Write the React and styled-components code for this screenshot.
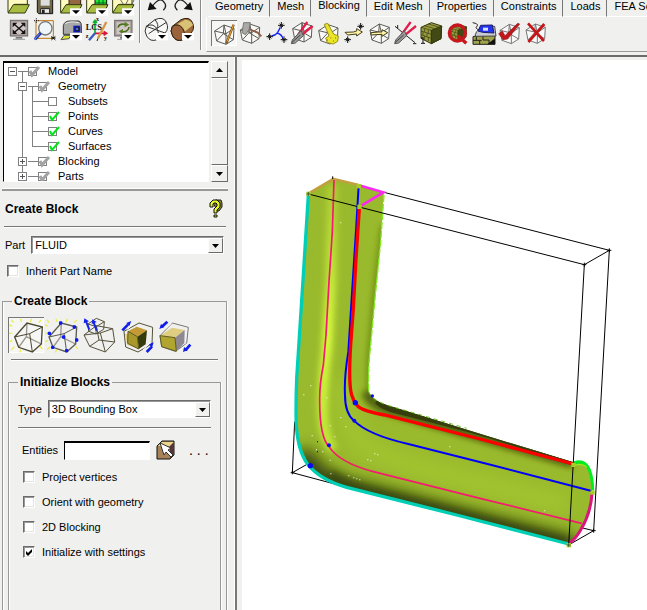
import React from "react"
import styled, { createGlobalStyle, css } from "styled-components"

const GlobalStyle = createGlobalStyle`
  * {
    box-sizing: border-box;
  }

  body {
    margin: 0;
    background: #f0f0ee;
    color: #000;
    font-family: "Liberation Sans", Arial, sans-serif;
    font-size: 11px;
    line-height: 14px;
  }

  button, input, select {
    font: inherit;
    color: inherit;
    margin: 0;
    padding: 0;
    border-radius: 0;
  }
`

const sunken = css`
  border: 1px solid;
  border-color: #6b6b6b #fff #fff #6b6b6b;
`

const Page = styled.div`
  min-height: 100vh;
  display: flex;
  flex-direction: column;
  overflow: hidden;
`

const Header = styled.header`
  display: flex;
  height: 57px;
  border-bottom: 2px solid #6b6b6b;
  overflow: hidden;
`

const ToolGroup = styled.div`
  display: grid;
  grid-template-columns: repeat(${p => p.$columns}, 26px);
  grid-template-rows: 16px 26px;
  row-gap: 1px;
  align-content: start;
  padding: 0 ${p => p.$right}px 0 ${p => p.$left}px;
  height: ${p => p.$height}px;
  border-right: 1px solid #8a8a8a;
  box-shadow: 1px 0 #fff;
`

const IconButton = styled.button`
  display: flex;
  align-items: center;
  justify-content: center;
  border: 0;
  background: none;

  svg {
    display: block;
  }
`

const ToolToggle = styled(IconButton)`
  width: ${p => p.$size}px;
  height: ${p => p.$size}px;
  flex: none;
  overflow: hidden;
  ${p => p.$active && "box-shadow: inset 1px 1px #777, inset -1px -1px #fff; background: #f6f6f4;"}
`

const TabArea = styled.div`
  flex: 1;
  min-width: 0;
  margin-left: 5px;
  overflow: hidden;
`

const TabList = styled.div`
  display: flex;
  height: 17px;
  padding-left: 2px;
`

const Tab = styled.button`
  flex: none;
  padding: 0 6px ${p => (p.$active ? 6 : 4)}px 7px;
  border: 0;
  border-right: 1px solid #777;
  border-bottom: 1px solid ${p => (p.$active ? "#f0f0ee" : "#fff")};
  background: none;
  line-height: 10px;
  white-space: nowrap;

  &:last-child {
    border-right: 0;
    padding-right: 0;
  }
`

const TabPanel = styled.div`
  display: flex;
  height: 35px;
  padding: 3px 0 0 4px;
  border-left: 1px solid #fff;
  border-bottom: 1px solid #999;
`

const Body = styled.main`
  flex: 1;
  display: flex;
`

const Side = styled.aside`
  flex: 0 0 237px;
  min-width: 0;
  display: flex;
  flex-direction: column;
  padding: 4px 7px 0 2px;
  border-right: 2px solid #777;
  box-shadow: inset -1px 0 #fff;
`

const Canvas = styled.section`
  flex: 1;
  min-width: 0;
  margin: 3px 0 0 5px;
  background: #fff;

  svg {
    display: block;
    width: 100%;
    height: auto;
  }
`

const TreeFrame = styled.div`
  display: flex;
  gap: 2px;
  height: 121px;
  margin-left: 1px;
`

const TreeBox = styled.ul`
  flex: 1;
  margin: 0;
  padding: 1px 0 0 4px;
  list-style: none;
  overflow: hidden;
  background: #fff;
  border: 1px solid #000;
  border-top-width: 2px;
  border-color: #000 #fff #fff #000;
`

const TreeRow = styled.li`
  display: flex;
  align-items: center;
  height: 15px;
`

const gray = "linear-gradient(#808080, #808080) no-repeat"
const segments = {
  t: `${gray} 4px 0 / 1px 8px`,
  b: `${gray} 4px 7px / 1px 8px`,
  l: `${gray} 0 7px / 5px 1px`,
  r: `${gray} 4px 7px / 6px 1px`,
}

const Guide = styled.span`
  width: 10px;
  height: 15px;
  display: flex;
  align-items: center;
  background: ${p => [...p.$lines].map(k => segments[k]).join(", ") || "none"};
`

const Expander = styled.button`
  width: 9px;
  height: 9px;
  border: 1px solid #808080;
  background:
    linear-gradient(#555, #555) no-repeat 1px 3px / 5px 1px,
    ${p => (p.$open ? "" : "linear-gradient(#555, #555) no-repeat 3px 1px / 1px 5px,")}
    #fff;
`

const TreeLabel = styled.label`
  display: flex;
  align-items: center;
  gap: 10px;
  line-height: 15px;
`

const TreeMark = styled.span`
  display: grid;
  width: 10px;
  height: 12px;
  align-items: center;

  input, svg {
    grid-area: 1 / 1;
  }

  svg {
    overflow: visible;
    pointer-events: none;
  }
`

const TreeCheck = styled.input`
  appearance: none;
  width: 9px;
  height: 9px;
  border: 1px solid #808080;
  background: #fff;
`

const ScrollBar = styled.div`
  width: 17px;
  display: flex;
  flex-direction: column;
`

const raised = css`
  border: 1px solid;
  border-color: #fff #6b6b6b #6b6b6b #fff;
  background: #f0f0ee;
`

const ScrollButton = styled(IconButton)`
  ${raised}
  height: 17px;
`

const ScrollThumb = styled.div`
  ${raised}
  flex: 1;
`

const Splitter = styled.div`
  height: 3px;
  margin-top: 6px;
  border-top: 1px solid #fff;
  border-bottom: 2px solid #999;
`

const Rule = styled.hr`
  height: 2px;
  width: auto;
  margin: ${p => p.$margin || 0};
  border: 0;
  border-top: 1px solid #777;
  border-bottom: 1px solid #fff;
`

const TitleRow = styled.div`
  display: flex;
  align-items: center;
  justify-content: space-between;
  height: 35px;
  padding: 0 5px 0 3px;
`

const boldText = css`
  font-size: 12px;
  font-weight: 700;
  line-height: 14px;
`

const Title = styled.h2`
  ${boldText}
  margin: 0;
`

const Field = styled.div`
  display: flex;
  align-items: center;
  margin: ${p => p.$margin};
  gap: 6px;
`

const SelectFrame = styled.div`
  ${sunken}
  flex: 1;
  display: grid;
  height: 18px;
  background: #fff;
  box-shadow: inset 1px 1px #999;

  > * {
    grid-area: 1 / 1;
  }
`

const Select = styled.select`
  appearance: none;
  border: 0;
  padding-left: 3px;
  background: none;
  line-height: 16px;
`

const SelectArrow = styled.span`
  ${raised}
  justify-self: end;
  display: flex;
  align-items: center;
  justify-content: center;
  width: 15px;
  margin-top: 1px;
  pointer-events: none;
`

const TextBox = styled.input`
  width: 86px;
  height: 19px;
  border: 1px solid;
  border-top-width: 2px;
  border-color: #000 #fff #fff #000;
  background: #fff;
`

const CheckLabel = styled.label`
  display: flex;
  align-items: center;
  gap: 7px;
  height: 14px;
  margin: ${p => p.$margin || 0};
`

const CheckFrame = styled.span`
  display: grid;

  input, svg {
    grid-area: 1 / 1;
  }

  svg {
    pointer-events: none;
  }
`

const CheckInput = styled.input`
  ${sunken}
  appearance: none;
  width: 12px;
  height: 12px;
  background: #fff;
  box-shadow: inset 1px 1px #999, inset -1px -1px #e4e4e2;

  &:not(:checked) + svg {
    visibility: hidden;
  }
`

const Group = styled.fieldset`
  flex: 1;
  min-width: 0;
  display: flex;
  flex-direction: column;
  margin: ${p => p.$margin};
  padding: 0;
  border: 1px solid #999;
  border-bottom: 0;
  box-shadow: inset 1px 0 #fff, 1px 0 #fff;
`

const Legend = styled.legend`
  ${boldText}
  margin-left: 9px;
  padding: 0 2px;
`

const BlockTools = styled.div`
  display: flex;
  gap: 1px;
  margin: 9px 0 6px 5px;
`

const Checks = styled.div`
  display: flex;
  flex-direction: column;
  gap: 11px;
  margin: 10px 0 0 14px;
`

const MoreButton = styled.button`
  border: 0;
  background: none;
  margin-left: 7px;
  font-size: 14px;
  white-space: nowrap;
`

function Art({ box, children, stroke = "none" }) {
  const [, , w, h] = box
  return (
    <svg
      width={w / 3}
      height={h / 3}
      viewBox={box.join(" ")}
      fill="none"
      stroke={stroke}
      strokeWidth="3"
      aria-hidden="true"
    >
      {children}
    </svg>
  )
}

const Drop = ({ x, y }) => (
  <g stroke="none">
    <rect x={x} y={y} width="36" height="22" fill="#fff" />
    <path d={`M${x + 6} ${y + 6}h24l-12 11z`} fill="#000" />
  </g>
)

const Down = () => (
  <svg width="7" height="4" viewBox="0 0 7 4" aria-hidden="true">
    <path d="M0 0h7L3.5 4z" />
  </svg>
)

const Up = () => (
  <svg width="7" height="4" viewBox="0 0 7 4" aria-hidden="true">
    <path d="M0 4h7L3.5 0z" />
  </svg>
)

const Folder = ({ x, children }) => (
  <g stroke="#333a10">
    <path d={`M${x + 2} -8v45h8l12-24h38v-21z`} fill="#fffbc0" />
    {children}
    <path d={`M${x + 18} 14h48l-13 25h-51z`} fill="#a9bd42" />
  </g>
)

const Monitor = ({ x }) => (
  <g>
    <rect x={x} y="64" width="52" height="47" fill="#aaa19f" stroke="#6c6664" />
    <rect x={x + 6} y="70" width="40" height="35" fill="#d2c7c7" />
    <path d={`M${x + 16} 114h20v5h-20z`} fill="#777" />
    <path d={`M${x + 8} 121h36`} stroke="#999" />
  </g>
)

const fileTools = [
  ["Open", [18, 0, 78, 48], <Folder x={22} />],
  ["Save", [96, 0, 78, 48], (
    <>
      <path d="M112 -5h46v46h-42l-4-4z" fill="#71684a" stroke="#111" />
      <path d="M122 0h27v17h-27z" fill="#ddd" />
      <path d="M122 26h27v14h-27z" fill="#eee" stroke="#222" />
      <path d="M126 29h8v10h-8z" fill="#222" />
    </>
  )],
  ["Open geometry", [174, 0, 78, 48], (
    <>
      <Folder x={180}><path d="M207 -4h35v26h-35z" fill="#936744" stroke="#3c2414" /></Folder>
      <Drop x={210} y={25} />
    </>
  )],
  ["Open mesh", [252, 0, 78, 48], (
    <>
      <Folder x={258}>
        <path d="M285 -4h35v26h-35z" fill="#20ed38" stroke="#111" />
        <path d="M297 0v20M309 0v20M285 9h35" stroke="#086318" />
      </Folder>
      <Drop x={288} y={25} />
    </>
  )],
  ["Open blocking", [330, 0, 78, 48], (
    <>
      <Folder x={336}><path d="M362 0l12 19 20-3 8-16M374 19l10-19" stroke="#686868" /></Folder>
      <Drop x={366} y={25} />
    </>
  )],
  ["Fit window", [18, 54, 78, 78], (
    <>
      <Monitor x={31} />
      <path d="M41 74l32 28M73 74L41 102" stroke="#111" strokeWidth="4" />
      <path d="M38 71h14l-14 14zM76 71H62l14 14zM76 105V91l-14 14zM38 105h14L38 91z" fill="#111" />
    </>
  )],
  ["Zoom", [96, 54, 78, 78], (
    <>
      <path d="M108 65h52v53h-52z" stroke="#bd7510" />
      <path d="M102 65h14M109 58v14" stroke="#111" strokeDasharray="3" />
      <circle cx="136" cy="88" r="20" fill="#eef6fa" stroke="#777" strokeWidth="4" />
      <path d="M122 102l-17 19" stroke="#1e2da5" strokeWidth="9" />
      <path d="M119 104l-17 19" stroke="#77a8e8" />
      <path d="M154 112l12 11M166 112l-12 11M153 117h14" stroke="#111" />
    </>
  )],
  ["Measure", [174, 54, 78, 78], (
    <>
      <path d="M190 80q3-14 20-14h28q7 6 6 16v24h-54z" fill="#a8a8a6" stroke="#333" />
      <path d="M196 74q14-9 40-3" stroke="#eee" />
      <path d="M220 80h21v20h-21z" fill="#141cbd" />
      <circle cx="231" cy="90" r="6" stroke="#111" fill="#4771d8" />
      <path d="M183 122l9-13h20l-5 10z" fill="#d8e336" stroke="#555" />
      <Drop x={210} y={102} />
    </>
  )],
  ["Local coordinates", [252, 54, 78, 78], (
    <>
      <path d="M285 103V66M279 72l6-8 6 8" stroke="#0bb42f" strokeWidth="5" />
      <path d="M285 103h32M311 97l9 6-9 6" stroke="#d71938" strokeWidth="5" />
      <path d="M285 103l-18 21" stroke="#3b58b9" strokeWidth="7" />
      <path d="M319 69l-25 49" stroke="#d79742" strokeWidth="7" />
      <path d="M294 118l-3 8" stroke="#222" />
      <g fill="#111" fontFamily="Liberation Serif, serif" fontWeight="700">
        <text x="257" y="93" fontSize="25">LCS</text>
        <g fontSize="18">
          <text x="288" y="66">x</text>
          <text x="312" y="122">y</text>
          <text x="257" y="117">z</text>
        </g>
      </g>
    </>
  )],
  ["Refresh", [330, 54, 78, 78], (
    <>
      <Monitor x={344} />
      <path d="M354 86q3-14 22-10M387 84q-2 16-22 14" stroke="#486f1b" strokeWidth="5" />
      <path d="M374 68l14 9-14 8zM369 90l-13 7 13 9z" fill="#587e25" />
      <Drop x={366} y={102} />
    </>
  )],
]

const viewTools = [
  ["Undo", [432, 0, 78, 48], (
    <>
      <path d="M456 20Q480-13 493 8q9 11-3 23" stroke="#222" strokeWidth="4" />
      <path d="M443 31l7-25 20 21z" fill="#111" />
    </>
  )],
  ["Redo", [510, 0, 78, 48], (
    <>
      <path d="M566 20Q543-13 529 8q-9 11 3 23" stroke="#222" strokeWidth="4" />
      <path d="M578 31l-7-25-20 21z" fill="#111" />
    </>
  )],
  ["Wire frame", [432, 54, 78, 78], (
    <>
      <path d="M439 82l26-20q25-11 34 8 9 19-4 32l-24 20q-20 8-31-11-9-15-1-29z" fill="#f7f7f5" stroke="#333" />
      <path d="M439 82q19-11 31 6 10 15 1 34M439 82l56 20M465 62q13 16 6 26l28-18M446 104l24-16" stroke="#333" />
      <Drop x={468} y={102} />
    </>
  )],
  ["Solid", [510, 54, 78, 78], (
    <>
      <path d="M517 82l26-20q25-11 34 8 9 19-4 32l-24 20q-20 8-31-11-9-15-1-29z" fill="#9e6938" stroke="#2d2110" />
      <path d="M531 76l24-14q20 1 24 16l-27 22q-2-17-21-24z" fill="#d9c275" />
      <path d="M517 82q19-11 31 6 10 15 1 34-20 8-31-11-9-15-1-29z" fill="#9b633c" stroke="#2d2110" />
      <Drop x={546} y={102} />
    </>
  )],
]

const Wire = ({ x, y = 72, color = "#5d5d57" }) => (
  <g transform={`translate(${x} ${y})`} stroke={color} strokeWidth="3">
    <path d="M2 20L30 2l30 10-2 34-22 14-28-10z" fill="#f9f9f7" />
    <path d="M2 20l34 8 24-16M36 28v32M30 2l-2 26L8 50M28 28l30 18M30 2l6 26" />
  </g>
)

const Star = ({ x, y }) => (
  <path
    d={`M${x - 10} ${y}h20M${x} ${y - 10}v20M${x - 5} ${y - 5}l10 10M${x + 5} ${y - 5}l-10 10`}
    stroke="#111"
  />
)

const Bricks = () => (
  <g stroke="#303910">
    <path d="M18 82l31-14 31 10-2 38-29 15-31-16z" fill="#9b9c3e" />
    <path d="M49 91l31-13-2 38-29 15z" fill="#434914" />
    <path d="M18 82l31 9v40M18 93l31 10M18 104l31 11M29 86v10M40 90v10M24 95v11M36 99v12M29 107v14M40 111v12M28 77l31 9M40 72l30 9" strokeWidth="2" />
  </g>
)

const Pliers = ({ x }) => (
  <g transform={`translate(${x} 0)`}>
    <path d="M19 103L46 66M24 109l38-31" stroke="#e31d4b" strokeWidth="7" />
    <path d="M27 92l7 15-24 22-12 2 3-11z" fill="#999" stroke="#555" />
    <path d="M0 127l25-22" stroke="#444" />
  </g>
)

const blockingTools = [
  ["Create block", [18, 60, 78, 78], (
    <>
      <Wire x={27} y={73} />
      <path d="M86 74L64 130" stroke="#805019" strokeWidth="7" />
      <path d="M86 74L66 125" stroke="#eba638" strokeWidth="3" />
    </>
  )],
  ["Split block", [96, 60, 78, 78], (
    <>
      <Wire x={104} y={70} />
      <path d="M120 82l38 16 11 11" stroke="#8e6048" strokeWidth="6" />
      <path d="M116 68h20l-4 21-11 15-10-6z" fill="#a9a9a7" stroke="#777" />
    </>
  )],
  ["Merge vertices", [174, 60, 78, 78], (
    <>
      <path d="M200 107q10 1 18-10l8-15M216 99q15 4 18 18" stroke="#1122ef" strokeWidth="4" />
      <Star x={229} y={76} />
      <Star x={194} y={110} />
      <Star x={237} y={119} />
    </>
  )],
  ["Edit block", [252, 60, 78, 78], <><Wire x={261} y={66} /><Pliers x={261} /></>],
  ["Associate", [330, 60, 78, 78], (
    <>
      <Wire x={339} y={72} />
      <path d="M358 73l10-3 18 32 14 6-2 16-13 8-18-4-5-14 10-6z" fill="#e9e628" stroke="#9c8d1f" />
      <path d="M366 120h3M376 114h3M384 123h3M390 114h3" stroke="#bd4f1b" />
    </>
  )],
  ["Move vertex", [408, 60, 78, 78], (
    <>
      <path d="M420 97l25-1 10-3v-7l17 10-17 12v-6l-27 3z" fill="#fff0a5" stroke="#41401d" />
      <Star x={467} y={79} />
      <Star x={428} y={119} />
    </>
  )],
  ["Transform blocks", [486, 60, 78, 78], (
    <>
      <Wire x={493} y={70} />
      <path d="M498 98l23-2h10v-7l17 9-17 11v-6l-33 2z" fill="#fff0a5" stroke="#41401d" />
    </>
  )],
  ["Edit edge", [564, 60, 78, 78], (
    <>
      <path d="M570 79l60 49M578 75v10M624 131h10" stroke="#222" />
      <Pliers x={571} />
    </>
  )],
  ["Pre-mesh params", [12, 60, 78, 78], <><Bricks /><path d="M24 111v18M18 114h6M18 130h12" stroke="#111" /></>],
  ["Pre-mesh quality", [90, 60, 78, 78], (
    <>
      <g transform="translate(90 18) scale(.8)"><Bricks /></g>
      <circle cx="127" cy="99" r="24" stroke="#c5171c" strokeWidth="10" />
      <path d="M128 107l26 23" stroke="#c5171c" strokeWidth="10" />
    </>
  )],
  ["Pre-mesh smooth", [168, 60, 78, 78], (
    <>
      <path d="M174 110l26-7h40v30h-66z" fill="#9fa14b" stroke="#222" />
      <path d="M174 121h26M184 109v12M194 121v12M204 107v13h18v13" stroke="#222" />
      <path d="M181 104q5-21 36-25h22l4 29-61 1z" fill="#c9ccd2" stroke="#444" />
      <path d="M189 93l8-17 35-1 5 24-34-2z" fill="#2533ef" stroke="#1a1b67" />
      <path d="M204 92v-9h15v9z" fill="#d7e4ff" />
      <path d="M188 89q-9-6-1-12 3-6-14-9" stroke="#222" />
      <path d="M217 133l23-18v18z" fill="#111" />
    </>
  )],
  ["Check blocks", [246, 60, 78, 78], (
    <>
      <Wire x={253} y={71} color="#777" />
      <path d="M251 101l11-8 8 14 38-37 6 2-36 45-14 2z" fill="#c41519" stroke="#8d2020" strokeWidth="2" />
    </>
  )],
  ["Delete block", [324, 60, 78, 78], (
    <>
      <Wire x={331} y={70} color="#777" />
      <path d="M339 70l48 53M388 72l-48 54" stroke="#c41519" strokeWidth="8" />
    </>
  )],
]

const Rays = ({ x }) => (
  <path
    transform={`translate(${x} 0)`}
    d="M34 91l7 8M61 88l4 9M95 87l-4 10M123 91l-7 8M28 105l8 5M27 131h10M29 156l8-4M34 180l9-9M59 188l4-8M127 178l-7-8"
    stroke="#ecec4c"
    strokeWidth="4"
  />
)

const Cube = ({ x = 0, color = "#4c4830" }) => (
  <g transform={`translate(${x} 0)`} stroke={color} strokeWidth="4">
    <path d="M81 100l-2 41-23 32M79 141l45 22" stroke="#99958d" />
    <path d="M44 142l37-42 46 12-3 51-27 24-41-14z" />
    <path d="M44 142l45-10 38-20M89 132l8 55" strokeWidth="3" />
  </g>
)

const createTools = [
  ["Initialize blocks", [24, 82, 108, 108], <><Rays x={0} /><Cube /></>],
  ["From vertices", [135, 82, 108, 108], (
    <>
      <Rays x={107} />
      <Cube x={103} color="#5a5a50" />
      {[[182, 100], [223, 112], [148, 131], [191, 142], [230, 151], [158, 173], [200, 183]].map(([x, y]) => (
        <path key={x} d={`M${x - 5} ${y}h10M${x} ${y - 5}v10`} stroke="#0a18f5" strokeWidth="7" />
      ))}
    </>
  )],
  ["Extrude face", [246, 82, 108, 108], (
    <>
      <g stroke="#55513d" strokeWidth="3">
        <path d="M252 136l37-28 49 9 6 40-28 30-47-17z" />
        <path d="M252 136l49-6 37-13M301 130l15 57M289 108l8 43-28 19M297 151l47 6M264 103l25-17 24 10-2 23-23 14-22-8zM264 103l25 8 24-15M289 111l-1 22" />
      </g>
      <path d="M268 120l-10-25M290 123l-9-25" stroke="#1424e9" strokeWidth="6" />
      <path d="M251 101l2-15 14 9zM275 103l2-14 13 8z" fill="#1424e9" />
    </>
  )],
  ["Blocks from 2D", [357, 82, 108, 108], (
    <>
      <path d="M372 125l45-25 41 13-2 49-42 25-37-15z" stroke="#56523c" />
      <path d="M384 125l26-14 31 11-29 19z" fill="#c49a35" />
      <path d="M412 141l29-19-4 42-21 14z" fill="#353b0b" />
      <path d="M376 132l36 9 4 37-35-13z" fill="#e0ca79" />
      <path d="M384 125l28 16 4 37-33-17z" fill="#a9992b" stroke="#5d5922" />
      <path d="M367 122l17-17M440 187l16-16" stroke="#101ce8" strokeWidth="8" />
      <path d="M379 100l15-6-6 15zM447 164l14-6-5 16z" fill="#101ce8" />
      <path d="M382 119l19-18M429 180l21-20" stroke="#fff" />
    </>
  )],
  ["Blocks to 2D", [468, 82, 108, 108], (
    <>
      <path d="M480 138l37-38 48 13-5 48-34 24-41-14z" stroke="#777" />
      <path d="M480 138l36-24 38 7-29 23z" fill="#dfcd81" />
      <path d="M525 144l29-23-1 39-24 25z" fill="#8e8890" />
      <path d="M480 138l45 6 4 41-44-14z" fill="#b0a52e" stroke="#5f5a20" />
      <path d="M485 112l17-16M556 182l15-17" stroke="#101ce8" strokeWidth="8" />
      <path d="M478 118l5-15 10 9zM549 187l3-15 12 9z" fill="#101ce8" />
      <path d="M497 117l17-16M542 181l20-20" stroke="#fff" />
    </>
  )],
]

const tabs = ["Geometry", "Mesh", "Blocking", "Edit Mesh", "Properties", "Constraints", "Loads", "FEA So"]

const treeRows = [
  { name: "Model", guides: [], expander: "", open: true, tail: ["lrb"], mark: "part" },
  { name: "Geometry", guides: [""], expander: "tb", open: true, tail: ["lrb"], mark: "part" },
  { name: "Subsets", guides: ["", "tb"], tail: ["tbr", "lr"] },
  { name: "Points", guides: ["", "tb"], tail: ["tbr", "lr"], mark: "all" },
  { name: "Curves", guides: ["", "tb"], tail: ["tbr", "lr"], mark: "all" },
  { name: "Surfaces", guides: ["", "tb"], tail: ["tr", "lr"], mark: "all" },
  { name: "Blocking", guides: [""], expander: "tb", tail: ["lr"], mark: "part" },
  { name: "Parts", guides: [""], expander: "t", tail: ["lr"], mark: "part" },
]

function TreeItem({ name, guides, expander, open, tail, mark }) {
  return (
    <TreeRow>
      {guides.map((g, i) => <Guide key={i} $lines={g} />)}
      {expander !== undefined && (
        <Guide $lines={expander}>
          <Expander type="button" $open={open} aria-label={`Toggle ${name}`} />
        </Guide>
      )}
      {tail.map((g, i) => <Guide key={i} $lines={g} />)}
      <TreeLabel>
        <TreeMark>
          <TreeCheck type="checkbox" defaultChecked={!!mark} />
          {mark && (
            <svg width="12" height="12" viewBox="0 0 12 12" fill="none" aria-hidden="true">
              <path
                d="M2 5l2 4 7-8"
                stroke={mark === "all" ? "#00e516" : "#a3a3a3"}
                strokeWidth={mark === "all" ? 2 : 3}
              />
            </svg>
          )}
        </TreeMark>
        {name}
      </TreeLabel>
    </TreeRow>
  )
}

function Tools({ items, size, active }) {
  return items.map(([name, box, art], i) => (
    <ToolToggle key={name} type="button" aria-label={name} $size={size} $active={i === active}>
      <Art box={box}>{art}</Art>
    </ToolToggle>
  ))
}

function IconGrid({ items }) {
  return items.map(([name, box, art]) => (
    <IconButton key={name} type="button" aria-label={name}>
      <Art box={box}>{art}</Art>
    </IconButton>
  ))
}

function Check({ children, checked, margin }) {
  return (
    <CheckLabel $margin={margin}>
      <CheckFrame>
        <CheckInput type="checkbox" defaultChecked={checked} />
        <svg width="12" height="12" viewBox="0 0 12 12" aria-hidden="true">
          <path d="M3 5l2 2 4-4v3L5 10 3 8z" />
        </svg>
      </CheckFrame>
      {children}
    </CheckLabel>
  )
}

function Dropdown({ id, value }) {
  return (
    <SelectFrame>
      <Select id={id} defaultValue={value}>
        <option>{value}</option>
      </Select>
      <SelectArrow><Down /></SelectArrow>
    </SelectFrame>
  )
}

const bodyPath =
  "M85 87L158 42L312 82L300 260L285 400L270 560Q264 620 266 680Q275 705 320 720L880 892Q905 884 922 905Q938 935 938 980Q930 1050 905 1095Q890 1122 866 1139L200 967Q120 945 83 898Q48 850 48 750Q48 690 50 640L70 330Z"
const pinkPath =
  "M162 45L157 200L147 350L138 510L130 600Q118 660 119 710Q119 815 147 845Q178 893 280 920L600 1000L905 1075"
const bluePath =
  "M236 62L229 180L215 400L205 560Q192 640 195 690Q195 745 222 767Q265 810 385 837L620 896L935 978"
const redPath =
  "M238 130L228 280L220 430L212 540Q205 655 215 690Q220 708 232 722Q245 738 320 751L600 822L880 897"
const cyanPath =
  "M85 90L70 330L50 640Q48 690 48 750Q48 850 83 898Q120 945 200 967L530 1050L866 1137"

const specks = [
  [181, 172], [91, 661], [70, 688], [139, 697], [181, 757], [196, 784], [149, 781], [163, 814], [95, 811],
  [108, 853], [127, 859], [149, 884], [151, 925], [205, 931], [220, 937], [229, 940], [238, 943], [262, 883],
  [271, 886], [283, 865], [292, 868], [508, 844], [793, 1036],
]

const Blur = ({ id, amount }) => (
  <filter id={id} filterUnits="userSpaceOnUse" x="-100" y="-100" width="1250" height="1400">
    <feGaussianBlur stdDeviation={amount} />
  </filter>
)

function Model() {
  return (
    <svg viewBox="242 60 405 550" fill="none" role="img" aria-label="Pipe elbow inside its bounding box">
      <defs>
        <clipPath id="pipe"><path d={bodyPath} /></clipPath>
        <Blur id="soft" amount={10} />
        <Blur id="softer" amount={24} />
        <linearGradient id="fade" gradientUnits="userSpaceOnUse" x1="0" y1="80" x2="0" y2="880">
          <stop offset="0" stopColor="#c4e83a" stopOpacity=".5" />
          <stop offset=".55" stopColor="#dcff3e" />
          <stop offset="1" stopColor="#c6ef38" stopOpacity=".8" />
        </linearGradient>
      </defs>
      <g transform="translate(280 165) scale(.33333)">
        <g stroke="#000" strokeWidth="3">
          <path d="M44 770L37 923L88 894M37 923L190 964M312 82L988 256L913 299M988 256L941 1097L866 1140M941 1097L900 1087" />
        </g>
        <g clipPath="url(#pipe)">
          <path d={bodyPath} fill="#9aba2d" />
          <path d="M190 640Q180 760 240 830Q300 880 500 930L860 1020" stroke="#a4c832" strokeWidth="60" opacity=".7" filter="url(#softer)" />
          <path d="M157 60L153 350L140 560Q128 650 128 730Q130 820 160 855" stroke="url(#fade)" strokeWidth="30" filter="url(#soft)" />
          <path d="M60 860Q100 940 210 975L530 1058L880 1145" stroke="#2e3b08" strokeWidth="60" filter="url(#softer)" />
          <path d="M150 930Q190 960 250 977L530 1048L866 1136" stroke="#394709" strokeWidth="34" opacity=".75" filter="url(#soft)" />
          <path d="M310 180L285 400L268 590L268 690" stroke="#59750f" strokeWidth="14" opacity=".8" filter="url(#soft)" />
          <path d="M258 680Q270 715 325 735L880 895" stroke="#4d5e10" strokeWidth="30" filter="url(#soft)" />
          <path d="M290 710Q310 730 350 739L600 803L880 895L890 885L600 805L400 744L310 716Z" fill="#363e0d" stroke="#363e0d" strokeWidth="14" />
        </g>
        <path d="M312 90L302 230L285 400L270 560Q264 620 266 680" stroke="#7cec1d" strokeWidth="4" strokeDasharray="22 5" />
        <path d="M266 680Q276 704 320 720L560 790" stroke="#6cc51f" strokeWidth="3" strokeDasharray="12 12" />
        <path d="M90 83L160 42L236 60" stroke="#c1a13f" strokeWidth="8" />
        <path d={cyanPath} stroke="#00cfb6" strokeWidth="10" />
        <path d={pinkPath} stroke="#f5196f" strokeWidth="5" />
        <path d={bluePath} stroke="#0000fa" strokeWidth="6" />
        <path d={redPath} stroke="#fb0000" strokeWidth="10" />
        <path d="M237 61L310 82L244 122" stroke="#fb29ef" strokeWidth="8" />
        <path d="M883 893Q914 883 928 914Q938 940 938 976" stroke="#00ee20" strokeWidth="9" />
        <path d="M885 900Q912 896 920 907" stroke="#9ee721" strokeWidth="4" />
        <path d="M936 986Q932 1045 903 1093Q889 1119 868 1136" stroke="#d9187e" strokeWidth="9" />
        <g stroke="#000" strokeWidth="3">
          <path d="M85 87L913 299L866 1140M158 34v8M32 923h11M37 917v11M907 299h12M913 293v12M982 256h12M988 250v12M935 1097h12M941 1091v12" />
        </g>
        {[[85, 86], [236, 63], [238, 125], [880, 899], [937, 982], [866, 1140]].map(([x, y]) => (
          <rect key={y} x={x - 6} y={y - 6} width="13" height="13" fill="#a7cd27" />
        ))}
        <path d="M79 87h12M85 81v12M860 1140h12M866 1134v12" stroke="#333" strokeWidth="2" />
        {[[226, 713, 8], [223, 767, 6], [277, 693, 5], [147, 841, 6], [91, 902, 8]].map(([x, y, r]) => (
          <circle key={y} cx={x} cy={y} r={r} fill="#0a0af5" />
        ))}
        {specks.map(([x, y]) => <path key={`${x}-${y}`} d={`M${x} ${y}h3v3h-3z`} fill="#fff" />)}
        <path d="M111 829h3v3h-3zM111 859h3v3h-3z" fill="#000" />
      </g>
    </svg>
  )
}

export default function App() {
  return (
    <Page>
      <GlobalStyle />
      <Header>
        <ToolGroup $columns={5} $left={6} $right={3} $height={43}>
          <IconGrid items={fileTools} />
        </ToolGroup>
        <ToolGroup $columns={2} $left={4} $right={4} $height={50}>
          <IconGrid items={viewTools} />
        </ToolGroup>
        <TabArea>
          <TabList role="tablist">
            {tabs.map(name => (
              <Tab key={name} type="button" role="tab" aria-selected={name === "Blocking"} $active={name === "Blocking"}>
                {name}
              </Tab>
            ))}
          </TabList>
          <TabPanel role="tabpanel">
            <Tools items={blockingTools} size={26} active={0} />
          </TabPanel>
        </TabArea>
      </Header>
      <Body>
        <Side>
          <TreeFrame>
            <TreeBox>
              {treeRows.map(row => <TreeItem key={row.name} {...row} />)}
            </TreeBox>
            <ScrollBar>
              <ScrollButton type="button" aria-label="Scroll up"><Up /></ScrollButton>
              <ScrollThumb />
              <ScrollButton type="button" aria-label="Scroll down"><Down /></ScrollButton>
            </ScrollBar>
          </TreeFrame>
          <Splitter />
          <TitleRow>
            <Title>Create Block</Title>
            <IconButton type="button" aria-label="Help">
              <svg width="14" height="20" viewBox="0 0 14 20" aria-hidden="true">
                <path d="M4 3l3-2h5l1 3v4l-3 4H8z" fill="#88822a" stroke="#222" />
                <path d="M1 8V4l3-3h4l3 3v4l-3 3v3H5v-4l3-3V5L7 4H5L4 5v3z" fill="#e5f52d" stroke="#111" />
                <path d="M5 16h3v2H5z" fill="#e5f52d" stroke="#111" />
              </svg>
            </IconButton>
          </TitleRow>
          <Rule $margin="0 2px" />
          <Field $margin="8px 4px 0 3px">
            <label htmlFor="part">Part</label>
            <Dropdown id="part" value="FLUID" />
          </Field>
          <Check margin="10px 0 0 5px">Inherit Part Name</Check>
          <Group $margin="16px 1px 0 0">
            <Legend>Create Block</Legend>
            <BlockTools>
              <Tools items={createTools} size={36} active={0} />
            </BlockTools>
            <Rule $margin="0 8px" />
            <Group $margin="14px 5px 0">
              <Legend>Initialize Blocks</Legend>
              <Field $margin="11px 9px 0">
                <label htmlFor="type">Type</label>
                <Dropdown id="type" value="3D Bounding Box" />
              </Field>
              <Rule $margin="9px 9px 0" />
              <Field $margin="11px 9px 0 13px">
                <label htmlFor="entities">Entities</label>
                <TextBox id="entities" type="text" />
                <IconButton type="button" aria-label="Select entities">
                  <svg width="20" height="20" viewBox="0 0 20 20" aria-hidden="true">
                    <path d="M1 6l5-5h12v14l-4 4H1z" fill="#a8835a" stroke="#111" />
                    <path d="M2 6l4-4h12l-4 4z" fill="#ead58a" />
                    <path d="M14 6l4-4v13l-4 4z" fill="#5a3334" />
                    <path d="M4 3l11 5-3 2 5 5-2 2-5-5-2 3z" fill="#fff" stroke="#333" />
                  </svg>
                </IconButton>
                <MoreButton type="button" aria-label="More">. . .</MoreButton>
              </Field>
              <Checks>
                <Check>Project vertices</Check>
                <Check>Orient with geometry</Check>
                <Check>2D Blocking</Check>
                <Check checked>Initialize with settings</Check>
              </Checks>
            </Group>
          </Group>
        </Side>
        <Canvas>
          <Model />
        </Canvas>
      </Body>
    </Page>
  )
}
